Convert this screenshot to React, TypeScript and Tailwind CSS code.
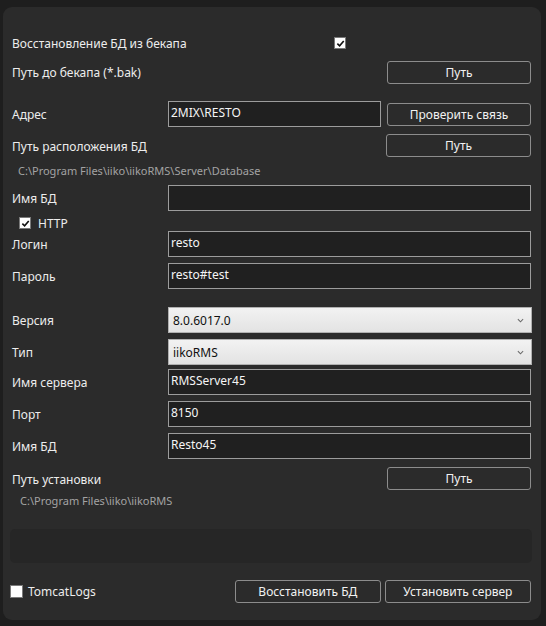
import type { ReactNode } from "react";

const font = { fontFamily: '"Noto Sans", "Open Sans", sans-serif' };

function Check({ checked, size = "w-[12px] h-[12px]" }: { checked?: boolean; size?: string }) {
    return (
        <span className={`${size} flex items-center justify-center border border-[#7a7a7a] bg-white`}>
            {checked && (
                <svg viewBox="0 0 10 10" className="h-[9px] w-[9px]">
                    <path d="M1.5 5.2 L4 7.6 L8.6 2.2" fill="none" stroke="#111" strokeWidth="1.8" />
                </svg>
            )}
        </span>
    );
}

function Btn({ children, className = "" }: { children: ReactNode; className?: string }) {
    return (
        <button
            className={`flex h-[23px] items-center justify-center rounded-[3px] border border-[#8c8c8c] bg-[#2b2b2b] pt-[1px] text-[12px] text-[#f2f2f2] ${className}`}
        >
            {children}
        </button>
    );
}

function Field({ value, className = "w-[363px]" }: { value?: string; className?: string }) {
    return (
        <div className={`h-[26px] border border-[#9c9c9c] bg-[#202020] pl-[2px] pt-[3px] text-[12px] leading-[16px] text-[#f5f5f5] ${className}`}>
            {value}
        </div>
    );
}

function Select({ value }: { value: string }) {
    return (
        <div className="flex h-[26px] w-[364px] items-center justify-between border border-[#b0b0b0] bg-gradient-to-b from-[#f2f2f2] to-[#e3e3e3] pl-[4px] pr-[7px] pt-[1px] text-[12px] text-[#111]">
            <span>{value}</span>
            <svg viewBox="0 0 8 5" className="h-[5px] w-[7px]">
                <path d="M1 1 L4 4 L7 1" fill="none" stroke="#6a6a6a" strokeWidth="1.2" />
            </svg>
        </div>
    );
}

function Label({ children }: { children: ReactNode }) {
    return <span className="w-[156px] shrink-0 whitespace-nowrap pt-[2px] text-[12px] text-[#ededed]">{children}</span>;
}

export default function App() {
    return (
        <div className="h-[626px] w-[546px] bg-[#1e1e1e] pl-[3px] pt-[7px]" style={font}>
            <div className="flex h-[613px] w-[538px] flex-col rounded-[9px] bg-[#2b2b2b] pl-[9px] pt-[27px]">
                <div className="flex h-[18px] items-center">
                    <Label>Восстановление БД из бекапа</Label>
                    <span className="ml-[166px]">
                        <Check checked />
                    </span>
                </div>
                <div className="mt-[9px] flex h-[22px] items-center">
                    <Label>Путь до бекапа (*.bak)</Label>
                    <Btn className="ml-[219px] w-[144px]">Путь</Btn>
                </div>
                <div className="mt-[18px] flex h-[26px] items-center">
                    <Label>Адрес</Label>
                    <Field value="2MIX\RESTO" className="w-[213px]" />
                    <Btn className="ml-[6px] w-[144px]">Проверить связь</Btn>
                </div>
                <div className="mt-[7px] flex h-[23px] items-center">
                    <Label>Путь расположения БД</Label>
                    <Btn className="ml-[218px] w-[145px]">Путь</Btn>
                </div>
                <div className="mt-[7px] h-[14px] pl-[6px] text-[11px] leading-[14px] text-[#a3a3a3]">
                    C:\Program Files\iiko\iikoRMS\Server\Database
                </div>
                <div className="mt-[7px] flex h-[26px] items-center">
                    <Label>Имя БД</Label>
                    <Field />
                </div>
                <div className="mt-[5px] flex h-[14px] items-center pl-[7px]">
                    <Check checked />
                    <span className="ml-[7px] pt-[1px] text-[12px] text-[#ededed]">HTTP</span>
                </div>
                <div className="mt-[1px] flex h-[26px] items-center">
                    <Label>Логин</Label>
                    <Field value="resto" />
                </div>
                <div className="mt-[6px] flex h-[26px] items-center">
                    <Label>Пароль</Label>
                    <Field value="resto#test" />
                </div>
                <div className="mt-[18px] flex h-[26px] items-center">
                    <Label>Версия</Label>
                    <Select value="8.0.6017.0" />
                </div>
                <div className="mt-[6px] flex h-[26px] items-center">
                    <Label>Тип</Label>
                    <Select value="iikoRMS" />
                </div>
                <div className="mt-[4px] flex h-[26px] items-center">
                    <Label>Имя сервера</Label>
                    <Field value="RMSServer45" />
                </div>
                <div className="mt-[6px] flex h-[26px] items-center">
                    <Label>Порт</Label>
                    <Field value="8150" />
                </div>
                <div className="mt-[6px] flex h-[26px] items-center">
                    <Label>Имя БД</Label>
                    <Field value="Resto45" />
                </div>
                <div className="mt-[8px] flex h-[23px] items-center">
                    <Label>Путь установки</Label>
                    <Btn className="ml-[219px] w-[144px]">Путь</Btn>
                </div>
                <div className="mt-[4px] h-[13px] pl-[8px] text-[11px] leading-[13px] text-[#a3a3a3]">
                    C:\Program Files\iiko\iikoRMS
                </div>
                <div className="ml-[-2px] mt-[22px] h-[34px] w-[522px] rounded-[5px] bg-[#262626]" />
                <div className="ml-[-2px] mt-[17px] flex h-[23px] items-center">
                    <Check size="w-[13px] h-[13px]" />
                    <span className="ml-[5px] pt-[1px] text-[12px] text-[#ededed]">TomcatLogs</span>
                    <Btn className="ml-[139px] w-[146px]">Восстановить БД</Btn>
                    <Btn className="ml-[4px] w-[146px]">Установить сервер</Btn>
                </div>
            </div>
        </div>
    );
}
